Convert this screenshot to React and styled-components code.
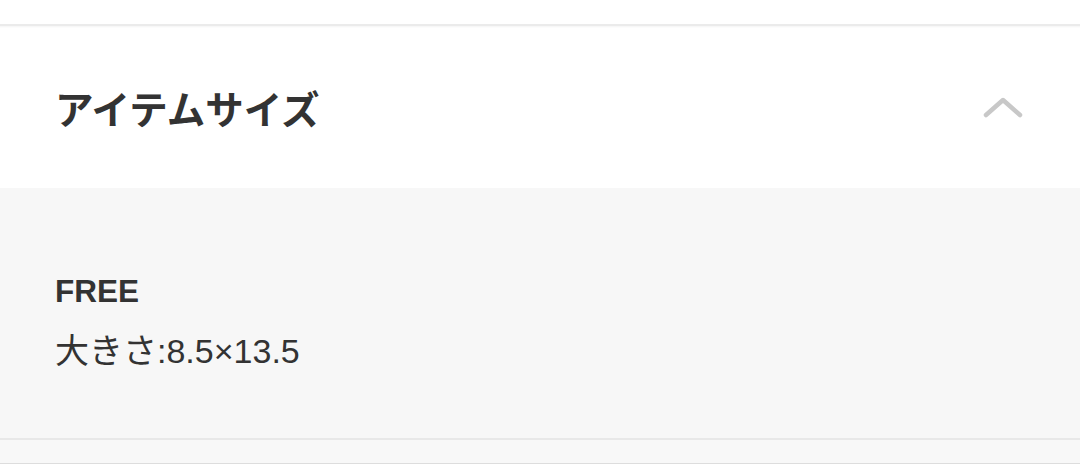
import React from "react";
import styled, { createGlobalStyle } from "styled-components";

const GlobalStyle = createGlobalStyle`
  html, body {
    margin: 0;
    padding: 0;
    background: #ffffff;
  }
  body {
    font-family: "Liberation Sans", "Noto Sans CJK JP", sans-serif;
    color: #333333;
  }
`;

const Page = styled.div`
  width: 1080px;
  height: 464px;
  overflow: hidden;
  display: flex;
  flex-direction: column;
  background: #f8f8f8;
`;

const TopSpace = styled.div`
  height: 24px;
  background: #ffffff;
  border-bottom: 2px solid #ebebeb;
`;

const Header = styled.div`
  height: 162px;
  display: flex;
  align-items: center;
  justify-content: space-between;
  padding: 0 57px 0 55px;
  background: #ffffff;
  box-shadow: inset 0 5px 2px -4px #f4f4f4;
`;

const Title = styled.h2`
  margin: 0;
  font-size: 38.5px;
  font-weight: 700;
  color: #333333;
  font-family: "Noto Sans CJK JP", sans-serif;
`;

const Chevron = styled.svg`
  width: 40px;
  height: 22px;
  display: block;
`;

const Panel = styled.div`
  height: 252px;
  background: #f7f7f7;
  border-bottom: 2px solid #e8e8e8;
  display: flex;
  flex-direction: column;
  padding: 83px 55px 0;
  box-sizing: border-box;
  gap: 20px;
`;

const SizeName = styled.div`
  font-size: 31.5px;
  font-weight: 700;
  color: #333333;
  line-height: 40px;
`;

const SizeDetail = styled.div`
  font-size: 34px;
  font-weight: 400;
  color: #333333;
  line-height: 40px;
`;

const Bottom = styled.div`
  flex: 1;
  background: #f8f8f8;
  border-bottom: 1px solid #dddddd;
`;

export default function App() {
  return (
    <>
      <GlobalStyle />
      <Page>
        <TopSpace />
        <Header>
          <Title>アイテムサイズ</Title>
          <Chevron viewBox="0 0 40 22">
            <path
              d="M3 19 L20 4 L37 19"
              fill="none"
              stroke="#c8c8c8"
              strokeWidth="4.5"
              strokeLinecap="round"
              strokeLinejoin="round"
            />
          </Chevron>
        </Header>
        <Panel>
          <SizeName>FREE</SizeName>
          <SizeDetail>大きさ:8.5×13.5</SizeDetail>
        </Panel>
        <Bottom />
      </Page>
    </>
  );
}
